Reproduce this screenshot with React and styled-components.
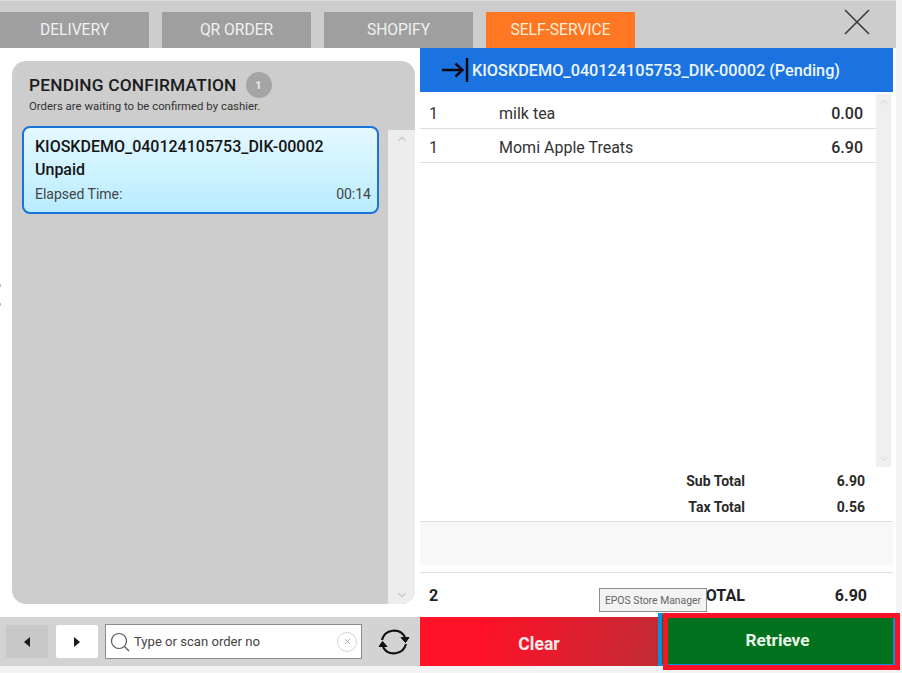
import React from 'react';
import styled, { createGlobalStyle } from 'styled-components';
import { ChevronUp, ChevronDown, X } from 'lucide-react';

const GlobalStyle = createGlobalStyle`
  html, body {
    margin: 0;
    padding: 0;
    background: #f3f3f3;
  }
  * {
    box-sizing: border-box;
  }
`;

const Viewport = styled.div`
  position: relative;
  width: 902px;
  height: 673px;
  overflow: hidden;
  font-family: Roboto, "Liberation Sans", sans-serif;
  color: #222;
`;

const Screen = styled.div`
  width: 896px;
  height: 666px;
  background: #fff;
  display: flex;
  flex-direction: column;
`;

const TopBar = styled.div`
  height: 48px;
  flex: none;
  background: #cdcdcd;
  border-top: 1px solid #dcdcdc;
  padding-top: 11px;
  display: flex;
  gap: 13px;
  position: relative;
`;

const Tab = styled.div`
  width: 149px;
  height: 36px;
  background: ${({ $active }) => ($active ? '#ff7722' : '#9f9f9f')};
  color: ${({ $active }) => ($active ? '#fdf0dc' : '#f1f1f1')};
  font-size: 15.6px;
  display: flex;
  align-items: center;
  justify-content: center;
`;

const CloseButton = styled.div`
  position: absolute;
  right: 26px;
  top: 8px;
  width: 26px;
  height: 26px;
  color: #3c3c3c;
`;

const Body = styled.div`
  flex: 1;
  min-height: 0;
  display: flex;
`;

const LeftColumn = styled.div`
  width: 420px;
  flex: none;
  padding: 13px 5px 13px 12px;
  display: flex;
`;

const PendingPanel = styled.div`
  flex: 1;
  background: #cdcdcd;
  border-radius: 14px;
  overflow: hidden;
  display: flex;
  flex-direction: column;
`;

const PanelHead = styled.div`
  height: 65px;
  flex: none;
  padding: 10px 0 0 17px;
`;

const PanelTitle = styled.div`
  display: flex;
  align-items: center;
  gap: 9px;
  height: 28px;
  font-size: 17.3px;
  font-weight: 500;
  letter-spacing: 0.2px;
  color: #1c1c1c;
`;

const CountBadge = styled.span`
  width: 26px;
  height: 26px;
  border-radius: 50%;
  background: #a5a5a5;
  color: #eee;
  font-size: 11px;
  font-weight: 700;
  display: flex;
  align-items: center;
  justify-content: center;
`;

const PanelHint = styled.div`
  font-size: 11.4px;
  line-height: 14px;
  color: #333;
`;

const PanelBody = styled.div`
  flex: 1;
  display: flex;
  min-height: 0;
`;

const OrderList = styled.div`
  flex: 1;
  padding: 0 9px 0 10px;
`;

const OrderCard = styled.div`
  height: 88px;
  border: 2px solid #1a73d8;
  border-radius: 8px;
  background: linear-gradient(#e4f8ff, #b8ecff);
  padding: 7px 6px 0 11px;
`;

const OrderLine = styled.div`
  font-size: 16px;
  line-height: 23px;
  font-weight: 500;
  color: #151515;
  white-space: nowrap;
`;

const ElapsedRow = styled.div`
  margin-top: 3px;
  display: flex;
  justify-content: space-between;
  font-size: 14px;
  line-height: 20px;
  color: #444;
`;

const PanelScroll = styled.div`
  width: 27px;
  flex: none;
  margin-top: 4px;
  background: #ededed;
  color: #c9c9c9;
  display: flex;
  flex-direction: column;
  justify-content: space-between;
  align-items: center;
  padding: 2px 0;
`;

const RightColumn = styled.div`
  width: 473px;
  flex: none;
  display: flex;
  flex-direction: column;
`;

const OrderHeader = styled.div`
  height: 44px;
  flex: none;
  background: #1a73e0;
  color: #eef5ff;
  font-size: 16.25px;
  font-weight: 500;
  display: flex;
  align-items: center;
  padding: 0 0 0 22px;
  white-space: nowrap;
`;

const ArrowIcon = styled.svg`
  width: 27px;
  height: 26px;
  margin-right: 3px;
  flex: none;
`;

const ItemsArea = styled.div`
  flex: 1;
  min-height: 0;
  display: flex;
  padding-top: 2px;
`;

const ItemList = styled.div`
  width: 456px;
  flex: none;
`;

const ItemRow = styled.div`
  height: 34.5px;
  border-bottom: 1px solid #dedede;
  display: grid;
  grid-template-columns: 70px 1fr auto;
  align-items: center;
  padding: 5px 13px 0 9px;
  font-size: 16px;
  color: #333;
`;

const Price = styled.span`
  font-weight: 500;
  color: #2b2b2b;
`;

const ItemScroll = styled.div`
  width: 15px;
  flex: none;
  background: #efefef;
  color: #cfcfcf;
  display: flex;
  flex-direction: column;
  justify-content: space-between;
  align-items: center;
  padding: 2px 0;
`;

const Summary = styled.div`
  flex: none;
  padding: 1px 28px 0 0;
`;

const SummaryRow = styled.div`
  height: 26px;
  display: grid;
  grid-template-columns: 1fr 120px;
  align-items: center;
  text-align: right;
  font-size: 14px;
  font-weight: 700;
  color: #2a2a2a;
`;

const Band = styled.div`
  height: 52px;
  flex: none;
  margin-top: 1px;
  border-top: 1px solid #dfdfdf;
  border-bottom: 1px solid #dfdfdf;
  background: linear-gradient(#f8f8f8 0 43px, #fff 43px);
`;

const TotalRow = styled.div`
  height: 44px;
  flex: none;
  display: flex;
  align-items: center;
  justify-content: space-between;
  padding: 0 26px 0 9px;
  font-size: 16px;
  font-weight: 700;
  color: #222;
`;

const TotalRight = styled.div`
  display: flex;
  gap: 90px;
`;

const BottomBar = styled.div`
  height: 49px;
  flex: none;
  display: flex;
`;

const SearchBar = styled.div`
  width: 420px;
  flex: none;
  background: #d3d3d3;
  display: flex;
  align-items: center;
  padding: 0 0 0 6px;
`;

const PageButton = styled.div`
  width: 42px;
  height: 33px;
  margin-right: ${({ $light }) => ($light ? '7px' : '8px')};
  border-radius: 2px;
  background: ${({ $light }) => ($light ? '#fff' : '#c8c8c8')};
  color: #1a1a1a;
  display: flex;
  align-items: center;
  justify-content: center;
`;

const SearchBox = styled.div`
  width: 257px;
  height: 35px;
  background: #fff;
  border: 1px solid #8c8c8c;
  display: flex;
  align-items: center;
  padding: 0 4px 0 4px;
  font-size: 13.1px;
  color: #444;
`;

const SearchText = styled.span`
  flex: 1;
  margin-left: 4px;
`;

const ClearCircle = styled.span`
  width: 20px;
  height: 20px;
  border-radius: 50%;
  border: 1px solid #d5d5d5;
  color: #9a9a9a;
  display: flex;
  align-items: center;
  justify-content: center;
`;

const RefreshIcon = styled.svg`
  width: 34px;
  height: 30px;
  margin-left: 15px;
  flex: none;
`;

const ClearButton = styled.div`
  width: 238px;
  flex: none;
  background: linear-gradient(100deg, #ff1127 25%, #c22b35 100%);
  color: #f6e9ea;
  font-size: 17.5px;
  font-weight: 700;
  padding-top: 4px;
  display: flex;
  align-items: center;
  justify-content: center;
`;

const RetrieveButton = styled.div`
  flex: 1;
  margin-top: -4px;
  margin-right: 1px;
  background: #02721f;
  border: 2px solid #0b8fe0;
  border-left-width: 4px;
  color: #eaf6ea;
  font-size: 17.2px;
  font-weight: 700;
  display: flex;
  align-items: center;
  justify-content: center;
`;

const Highlight = styled.div`
  position: absolute;
  left: 663px;
  top: 613px;
  width: 237px;
  height: 57px;
  border: 5px solid #ff1127;
  pointer-events: none;
`;

const Tooltip = styled.div`
  position: absolute;
  left: 599px;
  top: 588px;
  width: 108px;
  height: 24px;
  background: #f3f3f3;
  border: 1px solid #8e8e8e;
  color: #666;
  font-size: 10.4px;
  display: flex;
  align-items: center;
  justify-content: center;
`;

const EdgeDot = styled.i`
  position: absolute;
  left: 0;
  top: ${({ $top }) => $top}px;
  width: 1px;
  height: 3px;
  background: #bbb;
`;

const tabs = ['DELIVERY', 'QR ORDER', 'SHOPIFY', 'SELF-SERVICE'];
const items = [
  { qty: 1, name: 'milk tea', price: '0.00' },
  { qty: 1, name: 'Momi Apple Treats', price: '6.90' },
];

const App = () => (
  <Viewport>
    <GlobalStyle />
    <Screen>
      <TopBar>
        {tabs.map((tab) => (
          <Tab key={tab} $active={tab === 'SELF-SERVICE'}>{tab}</Tab>
        ))}
        <CloseButton>
          <svg width="26" height="26" viewBox="0 0 26 26" fill="none" stroke="currentColor" strokeWidth="1.6">
            <path d="M1 1 L25 25 M25 1 L1 25" />
          </svg>
        </CloseButton>
      </TopBar>

      <Body>
        <LeftColumn>
          <PendingPanel>
            <PanelHead>
              <PanelTitle>
                PENDING CONFIRMATION
                <CountBadge>1</CountBadge>
              </PanelTitle>
              <PanelHint>Orders are waiting to be confirmed by cashier.</PanelHint>
            </PanelHead>
            <PanelBody>
              <OrderList>
                <OrderCard>
                  <OrderLine>KIOSKDEMO_040124105753_DIK-00002</OrderLine>
                  <OrderLine>Unpaid</OrderLine>
                  <ElapsedRow>
                    <span>Elapsed Time:</span>
                    <span>00:14</span>
                  </ElapsedRow>
                </OrderCard>
              </OrderList>
              <PanelScroll>
                <ChevronUp size={14} />
                <ChevronDown size={14} />
              </PanelScroll>
            </PanelBody>
          </PendingPanel>
        </LeftColumn>

        <RightColumn>
          <OrderHeader>
            <ArrowIcon viewBox="0 0 27 26" fill="none" stroke="#0a0a14" strokeWidth="2.4">
              <path d="M0 13 H20 M13.5 6.5 L20.5 13 L13.5 19.5" />
              <path d="M25 1 V25" />
            </ArrowIcon>
            KIOSKDEMO_040124105753_DIK-00002 (Pending)
          </OrderHeader>
          <ItemsArea>
            <ItemList>
              {items.map((item) => (
                <ItemRow key={item.name}>
                  <span>{item.qty}</span>
                  <span>{item.name}</span>
                  <Price>{item.price}</Price>
                </ItemRow>
              ))}
            </ItemList>
            <ItemScroll>
              <ChevronUp size={12} />
              <ChevronDown size={12} />
            </ItemScroll>
          </ItemsArea>
          <Summary>
            <SummaryRow>
              <span>Sub Total</span>
              <span>6.90</span>
            </SummaryRow>
            <SummaryRow>
              <span>Tax Total</span>
              <span>0.56</span>
            </SummaryRow>
          </Summary>
          <Band />
          <TotalRow>
            <span>2</span>
            <TotalRight>
              <span>TOTAL</span>
              <span>6.90</span>
            </TotalRight>
          </TotalRow>
        </RightColumn>
      </Body>

      <BottomBar>
        <SearchBar>
          <PageButton>
            <svg width="8" height="10" viewBox="0 0 8 10" fill="currentColor"><path d="M7 0 V10 L1 5 Z" /></svg>
          </PageButton>
          <PageButton $light>
            <svg width="8" height="10" viewBox="0 0 8 10" fill="currentColor"><path d="M1 0 V10 L7 5 Z" /></svg>
          </PageButton>
          <SearchBox>
            <svg width="20" height="22" viewBox="0 0 20 22" fill="none" stroke="#555" strokeWidth="1.2">
              <circle cx="9" cy="10" r="7.5" />
              <path d="M14.5 15.5 L19 20" />
            </svg>
            <SearchText>Type or scan order no</SearchText>
            <ClearCircle><X size={9} /></ClearCircle>
          </SearchBox>
          <RefreshIcon viewBox="0 0 34 30" fill="none" stroke="#111" strokeWidth="2.2">
            <path d="M5 13 A12.5 12.5 0 0 1 28 10" />
            <path d="M29 17 A12.5 12.5 0 0 1 6 20" />
            <path d="M24 10.5 H32 L28.5 15.5 Z" fill="#111" strokeWidth="1" />
            <path d="M2 19.5 H10 L5.5 14.5 Z" fill="#111" strokeWidth="1" />
          </RefreshIcon>
        </SearchBar>
        <ClearButton>Clear</ClearButton>
        <RetrieveButton>Retrieve</RetrieveButton>
      </BottomBar>
    </Screen>

    <Tooltip>EPOS Store Manager</Tooltip>
    <Highlight />
    <EdgeDot $top={284} />
    <EdgeDot $top={303} />
  </Viewport>
);

export default App;
